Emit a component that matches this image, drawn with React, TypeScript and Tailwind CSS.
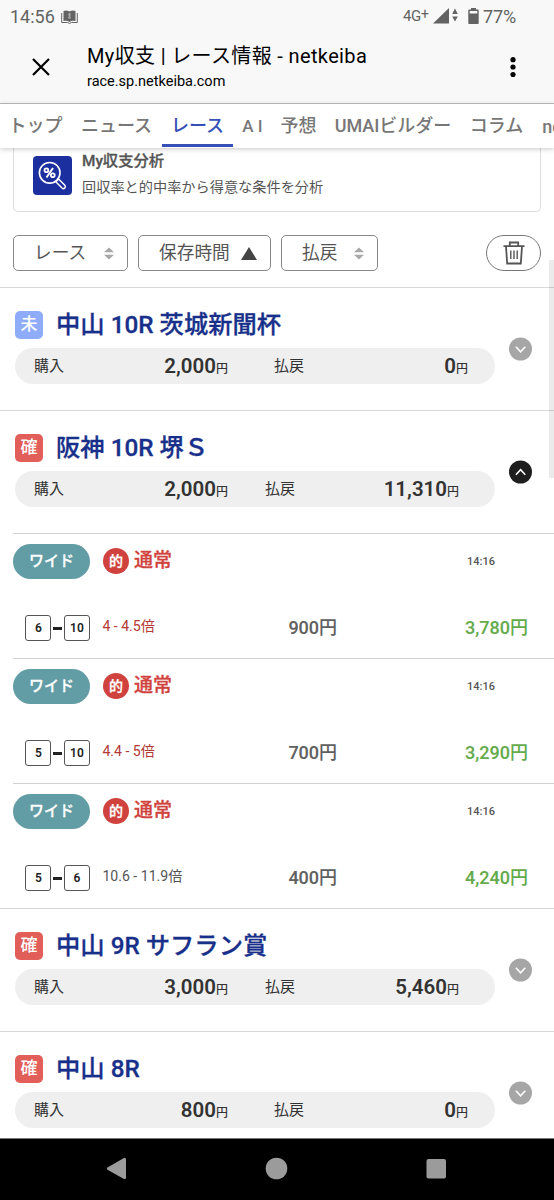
import clsx from "clsx";

type Bet = { nums: [string, string]; odds: string; hot: boolean; stake: string; payout: string; time: string };
type Race = { name: string; settled: boolean; bought: string; paid: string; open?: boolean };

const tabs = [
  { label: "トップ", className: "w-[71px]" },
  { label: "ニュース", className: "w-[91px]" },
  { label: "レース", className: "w-[71px]", active: true },
  { label: "A I", className: "w-[39px] pt-[2px] text-[17px]" },
  { label: "予想", className: "w-[53px]" },
  { label: "UMAIビルダー", className: "w-[136px]" },
  { label: "コラム", className: "w-[71px]" },
  { label: "ne", className: "w-[40px] pt-[2px]" },
];

const bets: Bet[] = [
  { nums: ["6", "10"], odds: "4 - 4.5倍", hot: true, stake: "900円", payout: "3,780円", time: "14:16" },
  { nums: ["5", "10"], odds: "4.4 - 5倍", hot: true, stake: "700円", payout: "3,290円", time: "14:16" },
  { nums: ["5", "6"], odds: "10.6 - 11.9倍", hot: false, stake: "400円", payout: "4,240円", time: "14:16" },
];

const races: Race[] = [
  { name: "中山 10R 茨城新聞杯", settled: false, bought: "2,000", paid: "0" },
  { name: "阪神 10R 堺Ｓ", settled: true, bought: "2,000", paid: "11,310", open: true },
  { name: "中山 9R サフラン賞", settled: true, bought: "3,000", paid: "5,460" },
  { name: "中山 8R", settled: true, bought: "800", paid: "0" },
];

const StatusBar = () => (
  <div className="flex h-8 items-center pl-[10px] text-[18px] text-[#636363]">
    <span className="w-[51px] whitespace-nowrap">14:56</span>
    <svg width="17" height="14" viewBox="0 0 17 14" className="mt-px">
      <path d="M2.5 1Q6 0 8.5 1.5Q11 0 14.5 1V11Q11 10 8.5 12Q6 10 2.5 11Z" fill="#636363" />
      <path d="M.7 3V12.5H6.5L8.5 13.4L10.5 12.5H16.3V3" fill="none" stroke="#636363" strokeWidth="1" />
      <path d="M7.5 3H9.5V6L9 7H9.8V8.5H7.2V7H8L7.5 6Z" fill="#aaa" />
    </svg>
    <span className="ml-auto text-[15px] leading-none tracking-[-0.3px]">4G</span>
    <span className="mb-[5px] text-[14px] leading-none">+</span>
    <svg width="26" height="18" viewBox="0 0 26 18" className="ml-[4px]" fill="#636363">
      <path d="M0 16.5L16 1V16.5Z" />
      <path d="M19.2 7L22 1.5L24.8 7ZM19.2 9.5H24.8L22 14.5Z" />
    </svg>
    <svg width="11" height="18" viewBox="0 0 11 18" className="ml-[9px]" fill="#636363">
      <path d="M3 1H8V2.5H10Q10.7 2.5 10.7 3.3V16.2Q10.7 17 10 17H1Q.3 17 .3 16.2V3.3Q.3 2.5 1 2.5H3Z" />
      <path d="M1.7 4H9.3V6.5H1.7Z" fill="#f8f8f8" />
    </svg>
    <span className="ml-[4px] w-[71px] text-[18px] tracking-[-0.1px]">77%</span>
  </div>
);

const TitleBar = () => (
  <div className="flex h-[72px] items-start border-b border-[#bdbdbd] text-black">
    <svg width="18" height="18" viewBox="0 0 18 18" className="mt-[26px] ml-8" stroke="currentColor" strokeWidth="2.2">
      <path d="M1 1L17 17M17 1L1 17" />
    </svg>
    <div className="mt-3 ml-[37px] whitespace-nowrap">
      <div className="text-[20px] leading-[25px] tracking-[0.36px]">My収支 | レース情報 - netkeiba</div>
      <div className="mt-[4px] text-[14.5px] leading-[18px]">race.sp.netkeiba.com</div>
    </div>
    <svg width="6" height="20" viewBox="0 0 6 20" className="mt-[25px] mr-[38px] ml-auto" fill="currentColor">
      <circle cx="3" cy="2.7" r="2.6" />
      <circle cx="3" cy="10" r="2.6" />
      <circle cx="3" cy="17.6" r="2.6" />
    </svg>
  </div>
);

const TabBar = () => (
  <nav className="relative z-10 flex h-11 overflow-hidden bg-white text-[18px] font-medium text-[#777] shadow-[0_1px_5px_rgba(0,0,0,0.22)]">
    {tabs.map((tab) => (
      <div
        key={tab.label}
        className={clsx(
          "flex h-[43px] shrink-0 items-center justify-center whitespace-nowrap",
          tab.className,
          tab.active && "border-b-[3px] border-[#3650b8] pt-[3px] text-[#3650b8]",
        )}
      >
        {tab.label}
      </div>
    ))}
  </nav>
);

const AnalysisCard = () => (
  <div className="mx-[13px] flex h-16 rounded-b-[5px] border border-t-0 border-[#dcdcdc] pl-[19px] text-[#555]">
    <svg width="39" height="39" viewBox="0 0 39 39" className="mt-2" fill="none" stroke="white">
      <rect width="39" height="39" rx="4" fill="#1b2f9f" stroke="none" />
      <circle cx="16.7" cy="16.8" r="10.3" strokeWidth="1.6" />
      <path d="M22.8 25.8L29 32Q30.5 33.3 31.8 32T31.8 29.2L25.6 23Z" strokeWidth="1.5" />
      <path d="M20 12L13.5 21.5" strokeWidth="2" />
      <circle cx="13.4" cy="14.3" r="1.9" strokeWidth="1.8" />
      <circle cx="19.8" cy="19.2" r="1.9" strokeWidth="1.8" />
    </svg>
    <div className="mt-[3px] ml-[10px] whitespace-nowrap">
      <div className="text-[15.3px] leading-5 font-medium [-webkit-text-stroke:0.3px]">My収支分析</div>
      <div className="mt-[6px] text-[14.2px] leading-5">回収率と的中率から得意な条件を分析</div>
    </div>
  </div>
);

const SortIcon = () => (
  <svg width="10" height="13" viewBox="0 0 10 13" fill="#a8a8a8">
    <path d="M0 5.3L5 .5L10 5.3ZM0 7.7H10L5 12.5Z" />
  </svg>
);

const FilterBar = () => (
  <div className="mt-[23px] flex h-9 gap-[10px] px-[13px] text-[17.7px] text-[#555]">
    <button className="flex w-[115px] items-center rounded-[5px] border border-[#888] pl-5">
      <span className="w-[70px] text-left">レース</span>
      <SortIcon />
    </button>
    <button className="flex w-[133px] items-center rounded-[5px] border border-[#888] pl-5">
      <span className="w-[82px] text-left whitespace-nowrap">保存時間</span>
      <svg width="16" height="13" viewBox="0 0 16 13" fill="#444">
        <path d="M0 13L8 0L16 13Z" />
      </svg>
    </button>
    <button className="flex w-[97px] items-center rounded-[5px] border border-[#888] pl-5">
      <span className="w-[52px] text-left">払戻</span>
      <SortIcon />
    </button>
    <button className="ml-auto flex w-[55px] items-center justify-center rounded-full border border-[#777]">
      <svg width="22" height="24" viewBox="0 0 22 24" fill="none" stroke="#555" strokeWidth="1.8">
        <path d="M.5 5.2H21.5M6.8 5V1.5H15.2V5M3 5.5L4.2 22.5H17.8L19 5.5" />
        <path d="M7.8 9.5V18M11 9.5V18M14.2 9.5V18" strokeWidth="1.4" />
      </svg>
    </button>
  </div>
);

const Toggle = ({ open }: { open?: boolean }) => (
  <svg width="24" height="24" viewBox="0 0 24 24" fill="none">
    <circle cx="12.5" cy="12" r="11.5" fill={open ? "#1e1e1e" : "#a6a6a6"} />
    <path d={open ? "M7.9 14.7L12.6 9.7L17.3 14.7" : "M7.9 9.8L12.6 14.9L17.3 9.8"} stroke="white" strokeWidth="1.6" />
  </svg>
);

const RaceHeader = ({ race }: { race: Race }) => {
  const empty = race.paid === "0";
  return (
    <section className="flex h-[123px] shrink-0 border-t border-[#d8d8d8] pl-[15px]">
      <div className="w-[480px]">
        <div className="mt-[22px] flex h-[30px] items-center">
          <span
            className={clsx(
              "flex size-7 items-center justify-center rounded-[5px] text-[17px] font-medium text-white",
              race.settled ? "bg-[#e15e59]" : "bg-[#8eacf9]",
            )}
          >
            {race.settled ? "確" : "未"}
          </span>
          <h2 className="ml-[13px] text-[24.3px] leading-[30px] font-medium whitespace-nowrap text-[#18308a] [-webkit-text-stroke:0.3px]">
            {race.name}
          </h2>
        </div>
        <div className="mt-2 flex h-9 items-center rounded-full bg-[#efefef] pl-[19px] text-[15px] text-[#333]">
          <span>購入</span>
          <span className="w-[164px] text-right">
            <b className="text-[20.5px] font-semibold">{race.bought}</b>
            <span className="text-[12px] font-medium">円</span>
          </span>
          <span className={empty ? "ml-[46px]" : "ml-[37px]"}>払戻</span>
          <span className="w-[164px] text-right">
            <b className="text-[20.5px] font-semibold">{race.paid}</b>
            <span className="text-[12px] font-medium">円</span>
          </span>
        </div>
      </div>
      <div className="mt-[49px] ml-[13px]">
        <Toggle open={race.open} />
      </div>
    </section>
  );
};

const Horse = ({ n }: { n: string }) => (
  <span className="flex size-[26px] items-center justify-center rounded-[3px] border border-[#555] text-[12px] font-semibold text-[#222]">
    {n}
  </span>
);

const BetRow = ({ bet }: { bet: Bet }) => (
  <div className="ml-[13px] h-[125px] shrink-0 border-t border-[#d2d2d2]">
    <div className="mt-[9px] flex h-9 items-center">
      <span className="flex h-[35px] w-[77px] items-center justify-center rounded-full bg-[#629da5] text-[15px] font-medium text-white [-webkit-text-stroke:0.3px]">
        ワイド
      </span>
      <span className="ml-[13px] flex size-[26px] items-center justify-center rounded-full bg-[#d0423d] text-[14px] font-medium text-white [-webkit-text-stroke:0.3px]">
        的
      </span>
      <span className="ml-[5px] text-[19px] font-medium text-[#d0423d] [-webkit-text-stroke:0.3px]">通常</span>
      <span className="mr-[59px] ml-auto pt-[2px] text-[11px] font-medium text-[#555]">{bet.time}</span>
    </div>
    <div className="mt-9 flex h-[26px] items-center">
      <div className="ml-[12.4px] flex w-[65px] items-center">
        <Horse n={bet.nums[0]} />
        <span className="mx-[2px] h-[3px] w-[8.5px] bg-[#222]"></span>
        <Horse n={bet.nums[1]} />
      </div>
      <span className={clsx("ml-3 w-[186px] pb-[3px] text-[14.1px]", bet.hot ? "text-[#b33a35]" : "text-[#555]")}>
        {bet.odds}
      </span>
      <span className="pb-px text-[18px] font-medium text-[#606060] [-webkit-text-stroke:0.1px]">{bet.stake}</span>
      <span className="mr-[26px] ml-auto pb-px text-[18px] font-medium text-[#64ab4c] [-webkit-text-stroke:0.1px]">
        {bet.payout}
      </span>
    </div>
  </div>
);

const NavBar = () => (
  <div className="h-[62px] shrink-0 border-t border-[#777] bg-black">
    <svg width="554" height="61" viewBox="0 0 554 61" fill="#9b9b9b">
      <path d="M107.5 28.5L123.5 19.2Q126 18 126 20.5V38.5Q126 41 123.5 39.8L107.5 30.8Q106 29.6 107.5 28.5Z" />
      <circle cx="276.5" cy="29.5" r="10.8" />
      <rect x="426.5" y="20" width="19.5" height="19.5" rx="2" />
    </svg>
  </div>
);

export default function App() {
  return (
    <div className="relative flex h-[1200px] w-[554px] flex-col overflow-hidden bg-white font-['Roboto','Noto_Sans_CJK_JP',sans-serif]">
      <header className="shrink-0 bg-[#f8f8f8]">
        <StatusBar />
        <TitleBar />
        <TabBar />
      </header>
      <main className="flex min-h-0 flex-1 flex-col overflow-hidden">
        <div className="h-[139px] shrink-0">
          <AnalysisCard />
          <FilterBar />
        </div>
        {races.map((race) => (
          <div key={race.name} className="shrink-0">
            <RaceHeader race={race} />
            {race.open && bets.map((bet) => <BetRow key={bet.payout} bet={bet} />)}
          </div>
        ))}
      </main>
      <div className="absolute top-[260px] right-0 h-[218px] w-[5px] bg-black/8"></div>
      <NavBar />
    </div>
  );
}
